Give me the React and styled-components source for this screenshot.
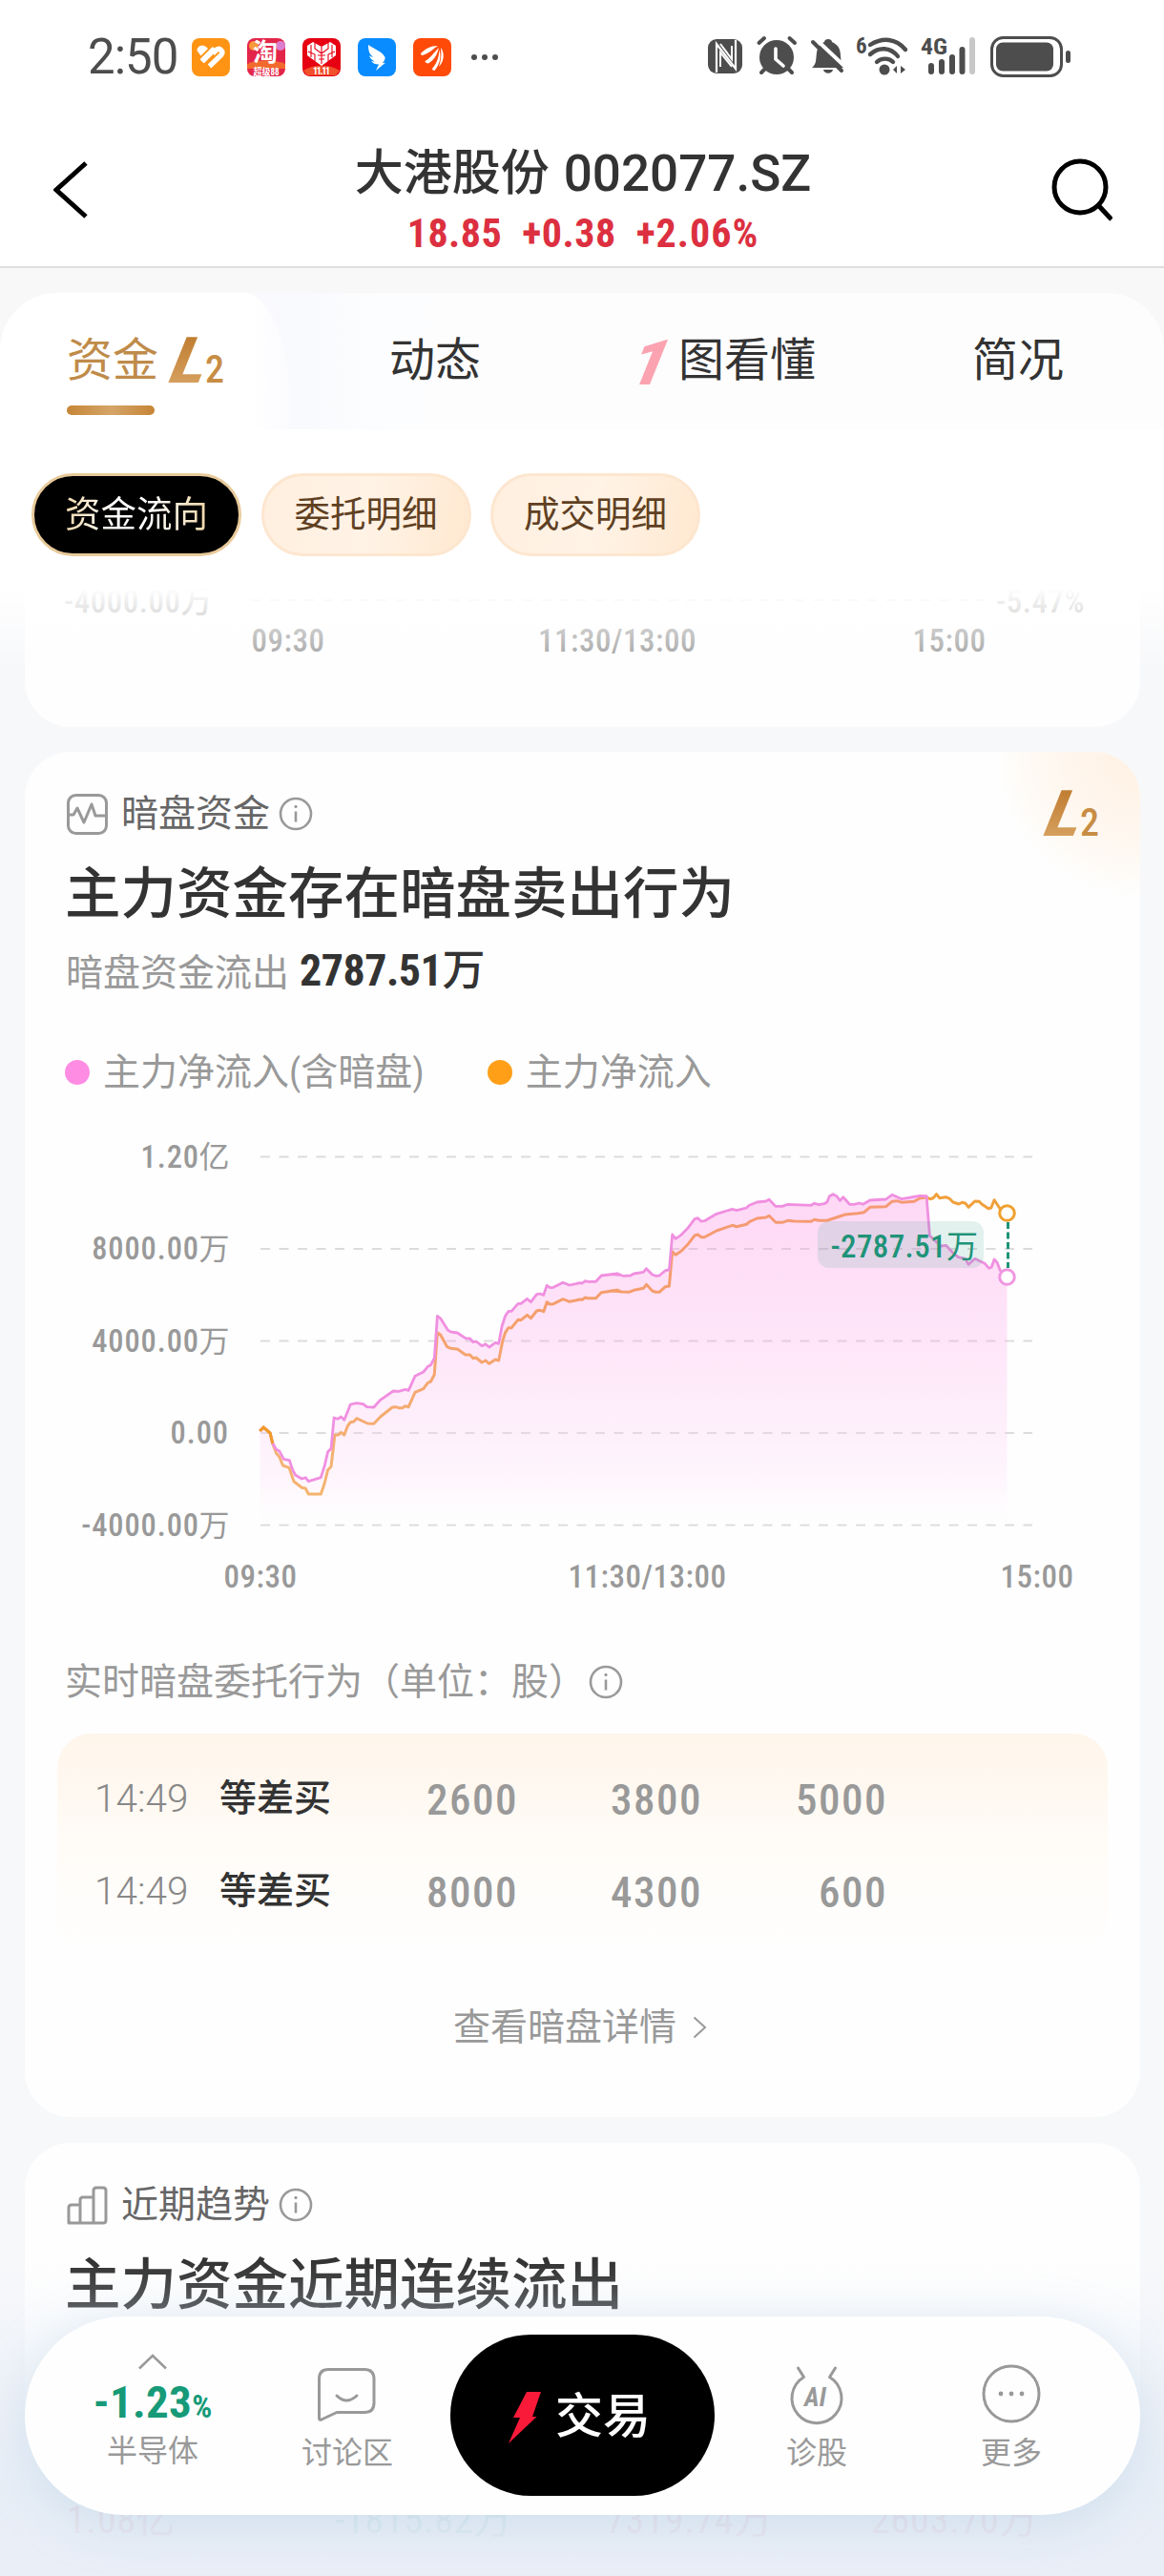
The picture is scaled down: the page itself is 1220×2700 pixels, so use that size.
import React from 'react';
import styled, { createGlobalStyle } from 'styled-components';

const GlobalStyle = createGlobalStyle`
  * {
    box-sizing: border-box;
  }

  body {
    margin: 0;
    font-family: Roboto, 'Noto Sans CJK SC', sans-serif;
    font-stretch: 87.5%;
    color: #333;
    background: #f7f8fa;
  }
`;

const Page = styled.div`
  position: relative;
  width: 1220px;
  height: 2700px;
  overflow: hidden;
  background: #f7f8fa;
`;

const Num = styled.span`
  font-size: ${(props) => props.$size}px;
  font-weight: ${(props) => props.$weight || 500};
  font-stretch: ${(props) => props.$stretch || 87.5}%;
  letter-spacing: ${(props) => props.$spacing || 0}px;
`;

/* status bar */

const StatusBar = styled.div`
  display: flex;
  justify-content: space-between;
  height: 120px;
  padding: 34px 96px 0 92px;
  background: #fff;
  color: #4d4d4d;
`;

const StatusSide = styled.div`
  display: flex;
  align-items: center;
  height: 52px;
`;

const Clock = styled.div`
  width: 109px;
  font-size: 51px;
  font-stretch: 100%;
  line-height: 54px;
  letter-spacing: -1px;
`;

const AppIcon = styled.svg`
  display: block;
  width: 40px;
  height: 40px;
  margin-right: 18px;
`;

const Dots = styled.svg`
  display: block;
  margin-left: 3px;
`;

/* nav bar */

const NavBar = styled.div`
  display: flex;
  justify-content: space-between;
  height: 161px;
  padding: 30px 54px 0 56px;
  background: #fff;
  border-bottom: 2px solid #dedede;
`;

const NavIcon = styled.svg`
  display: block;
  width: 64px;
  height: 66px;
  margin-top: 16px;
`;

const Stock = styled.div`
  text-align: center;
`;

const StockName = styled.div`
  display: flex;
  justify-content: center;
  gap: 15px;
  line-height: 64px;
  font-size: 51px;
  font-weight: 500;
`;

const Quote = styled.div`
  display: flex;
  justify-content: center;
  gap: 21px;
  margin-top: 6px;
  line-height: 50px;
  color: #dc3040;
`;

/* tabs */

const TabsArea = styled.div`
  height: 169px;
  padding-top: 26px;
  background: linear-gradient(#f8f8f8 80px, #fff 80px);
`;

const Tabs = styled.div`
  display: flex;
  height: 143px;
  border-radius: 60px 60px 0 0;
  overflow: hidden;
  background: linear-gradient(to right, #f9f9fe 270px, #f9fafd 320px, #fcfdfe 400px, #fdfdfe 480px);
`;

const Tab = styled.div`
  flex: none;
  width: ${(props) => props.$width}px;
  padding-left: ${(props) => props.$left}px;
  display: flex;
  height: 143px;
  font-size: 48px;
  line-height: 142px;
`;

const ActiveTab = styled.div`
  flex: none;
  width: 306px;
  height: 143px;
  padding: 41px 0 0 70px;
  background: linear-gradient(to right, #fff 265px, rgba(255, 255, 255, 0.2));
  border-radius: 0 50px 0 0 / 0 130px 0 0;
`;

const ActiveLabel = styled.div`
  display: flex;
  height: 60px;
  font-size: 48px;
  line-height: 60px;
  color: #bf8b4a;
`;

const Underline = styled.div`
  width: 92px;
  height: 10px;
  margin-top: 17px;
  border-radius: 5px;
  background: linear-gradient(to right, #c68536, #d5a568 50%, #c68536);
`;

const LevelTwo = styled.div`
  display: flex;
  align-items: baseline;
  height: 60px;
  margin-left: 11px;
  line-height: 60px;
  font-size: 40px;
  font-stretch: 75%;
  font-weight: 500;
  color: #c88d45;
`;

const LevelLetter = styled.span`
  display: inline-block;
  width: 38px;
  font-size: 67px;
  font-stretch: 100%;
  font-weight: 900;
  background: linear-gradient(to bottom, #bd7a2c, #d9a464);
  background-clip: text;
  color: transparent;
  transform: translateX(5px) skewX(-22deg);
`;

const BigOne = styled.span`
  width: 47px;
  margin-left: -4px;
  font-size: 66px;
  font-stretch: 100%;
  font-weight: 900;
  line-height: 147px;
  color: #fba3b1;
  transform: skewX(-22deg);
`;

/* pills */

const Pills = styled.div`
  display: flex;
  gap: 20.5px;
  height: 167px;
  padding: 46px 33px 0;
  background: #fff;
`;

const Pill = styled.div`
  width: 220px;
  height: 87px;
  border-radius: 44px;
  border: 3px solid #fde6cf;
  text-align: center;
  font-size: 37.5px;
  line-height: 81px;
  color: #5f4022;
  background: linear-gradient(100deg, #ffefdf, #fff3e6 50%, #ffe8d0);
`;

const ActivePill = styled(Pill)`
  border-color: #e8ca9b;
  background: #000;
  color: #fff;
`;

const PillText = styled.span`
  background: linear-gradient(to right, #f0d9ae, #fff 35%, #fff 60%, #efd6a8);
  background-clip: text;
  color: transparent;
`;

/* cards */

const Card = styled.section`
  position: relative;
  width: 1169px;
  height: ${(props) => props.$height}px;
  margin: 0 0 ${(props) => props.$gap || 0}px 26px;
  padding: 43px 34px 0;
  border-radius: 48px;
  background: #fefefe;
  overflow: hidden;
`;

const TailCard = styled(Card)`
  padding: 0;
  margin-bottom: 26px;
  border-radius: 0 0 48px 48px;
`;

const ScrollArea = styled.div`
  position: relative;
`;

const TopFade = styled.div`
  position: absolute;
  left: 0;
  top: 0;
  width: 100%;
  height: 84px;
  background: linear-gradient(#fff, rgba(255, 255, 255, 0));
`;

const Corner = styled.div`
  position: absolute;
  right: 0;
  top: 0;
  width: 170px;
  height: 150px;
  padding: 35px 0 0 58px;
  background: radial-gradient(circle at 100% 0, #fff0e2, rgba(255, 246, 236, 0.6) 50%, rgba(255, 255, 255, 0) 67%);
`;

const CardHead = styled.div`
  display: flex;
  align-items: center;
  height: 44px;
  padding-left: 10px;
  font-size: 39px;
  line-height: 44px;
  color: #666;
`;

const HeadIcon = styled.svg`
  display: block;
  width: 44px;
  height: 44px;
  margin-right: 13px;
`;

const Info = styled.svg`
  display: block;
  width: 36px;
  height: 36px;
  margin-left: ${(props) => props.$left}px;
`;

const CardTitle = styled.h2`
  margin: 27px 0 0 8px;
  height: 70px;
  font-size: 58.5px;
  font-weight: 500;
  line-height: 70px;
`;

const Summary = styled.div`
  display: flex;
  align-items: baseline;
  height: 46px;
  margin: 22px 0 0 9px;
  font-size: 39px;
  line-height: 46px;
  color: #999;
`;

const SummaryValue = styled.span`
  margin-left: 11px;
  color: #333;
`;

const Legend = styled.div`
  display: flex;
  height: 40px;
  margin: 64px 0 0 8px;
  font-size: 39px;
  line-height: 40px;
  color: #999;
`;

const LegendItem = styled.div`
  display: flex;
  align-items: center;
  margin-right: 66px;

  &::before {
    content: '';
    width: 26px;
    height: 26px;
    margin-right: 14px;
    border-radius: 13px;
    background: ${(props) => props.$color};
  }
`;

const Chart = styled.svg`
  display: block;
  width: 1100px;
  height: 500px;
  margin-top: 36px;
`;

const OrdersTitle = styled.div`
  display: flex;
  align-items: center;
  height: 46px;
  margin: 60px 0 31px 8px;
  font-size: 39px;
  line-height: 46px;
  color: #999;
`;

const Orders = styled.div`
  width: 1101px;
  height: 231px;
  padding: 19px 39px 0;
  border-radius: 36px;
  background: linear-gradient(#fff5eb, #fffcf8 55%, #fefefe);
`;

const OrderRow = styled.div`
  display: grid;
  grid-template-columns: 131px 126px 187px 193px 194px;
  align-items: center;
  height: 97px;
  line-height: 50px;
  color: #999;
`;

const OrderTime = styled.div`
  font-size: 40.5px;
  font-stretch: 100%;
  font-weight: 300;
  color: #888;
`;

const OrderType = styled.div`
  font-size: 39px;
  font-weight: 500;
  color: #333;
`;

const OrderVolume = styled.div`
  padding-top: 4px;
  font-size: 45px;
  font-weight: 500;
  letter-spacing: 1.5px;
  text-align: right;
`;

const More = styled.div`
  display: flex;
  align-items: center;
  justify-content: center;
  gap: 17px;
  height: 46px;
  margin-top: 54px;
  padding-right: 5px;
  font-size: 39px;
  line-height: 46px;
  color: #999;
`;

const Totals = styled.div`
  display: grid;
  grid-template-columns: 281px 284px 278px auto;
  margin: 189px 0 0 10px;
  font-size: 40px;
  line-height: 46px;
  letter-spacing: 0.8px;
`;

const Total = styled.div`
  color: ${(props) => (props.$down ? '#1f9c7c' : '#dc3040')};
`;

/* bottom bar */

const BottomFade = styled.div`
  position: absolute;
  left: 0;
  bottom: 0;
  width: 100%;
  height: 330px;
  background: linear-gradient(rgba(232, 238, 247, 0), rgba(232, 238, 247, 0.2) 50px, rgba(232, 238, 247, 0.7) 160px, rgba(230, 237, 246, 0.9) 240px, #e9eef7);
`;

const BottomBar = styled.nav`
  position: absolute;
  left: 26px;
  bottom: 64px;
  display: flex;
  width: 1169px;
  height: 208px;
  padding-left: 32px;
  border-radius: 104px;
  background: #fefefe;
  box-shadow: 0 10px 50px rgba(170, 200, 225, 0.4);
`;

const BarItem = styled.div`
  display: flex;
  flex-direction: column;
  align-items: center;
  width: 204px;
  height: 208px;
  padding-top: 38px;
  font-size: 32px;
  line-height: 40px;
  color: #999;
`;

const BarIcon = styled.svg`
  display: block;
  width: 64px;
  height: 72px;
  margin: 8px 0 5px;
`;

const Change = styled.div`
  height: 50px;
  margin: 9px 0 6px;
  line-height: 50px;
  color: #169a78;
  white-space: nowrap;
`;

const TradeButton = styled.div`
  display: flex;
  align-items: center;
  width: 277px;
  height: 169px;
  margin: 19px 5px 0 6px;
  padding: 0 0 7px 60px;
  border-radius: 85px;
  background: #000;
  color: #fff;
  font-size: 50px;
  font-weight: 500;
`;

const Bolt = styled.svg`
  width: 38px;
  height: 56px;
  margin: 12px 12px 0 0;
`;

// [x, y] pairs, opening session and the rest of the day
const mainEarly = [
  [555, 960], [565, 948], [583, 966], [590, 1000], [600, 1030], [608, 1040], [618, 1068], [635, 1075],
  [648, 1118], [670, 1138], [680, 1140], [688, 1158], [722, 1158], [732, 1125], [741, 1082], [750, 1072],
  [760, 972], [770, 972], [777, 964], [786, 972], [795, 945], [803, 932], [812, 930], [820, 920],
  [850, 936], [867, 937], [885, 915], [918, 885], [928, 884], [935, 887], [945, 887], [953, 881],
  [962, 884], [980, 838], [1003, 827], [1015, 808], [1023, 804], [1033, 782], [1041, 650], [1050, 658],
  [1068, 695], [1078, 700], [1096, 702], [1118, 720], [1130, 720], [1139, 731], [1147, 729], [1163, 744],
  [1173, 738], [1183, 748], [1200, 735], [1209, 738], [1220, 675], [1227, 650], [1236, 635], [1244, 635],
  [1262, 610], [1270, 611], [1287, 595], [1297, 605], [1313, 582], [1322, 580], [1332, 584], [1341, 554],
  [1350, 561], [1359, 560], [1385, 545], [1403, 553], [1420, 549], [1430, 546], [1438, 547], [1446, 540],
  [1453, 542], [1475, 542], [1490, 524], [1535, 517], [1543, 521],
];

const mainLate = [
  [0, 519], [18, 517], [30, 522], [52, 523], [66, 517], [93, 511], [101, 499], [118, 519], [128, 523],
  [138, 523], [155, 506], [166, 504], [175, 395], [184, 406], [200, 394], [220, 371], [238, 345], [247, 342],
  [256, 350], [266, 350], [300, 330], [345, 313], [357, 317], [385, 310], [393, 302], [415, 291], [440, 288],
  [449, 283], [468, 304], [486, 304], [502, 298], [520, 300], [568, 301], [577, 295], [590, 298], [613, 298],
  [665, 279], [700, 275], [718, 272], [735, 256], [780, 254], [797, 238], [812, 236], [825, 241], [860, 238],
  [875, 228], [895, 225], [905, 230], [914, 227], [923, 215], [932, 227], [950, 224], [960, 229], [970, 240],
  [986, 246], [996, 241], [1005, 244], [1014, 256], [1032, 237], [1044, 238], [1052, 247], [1070, 260],
  [1078, 258], [1087, 233], [1104, 262], [1123, 274],
];

const darkEarly = [
  [555, 960], [565, 948], [583, 966], [590, 998], [600, 1018], [608, 1022], [620, 1048], [636, 1052],
  [644, 1080], [652, 1098], [670, 1110], [680, 1106], [688, 1118], [705, 1112], [722, 1106], [732, 1070],
  [741, 1025], [750, 1015], [758, 918], [768, 922], [777, 915], [786, 925], [795, 900], [803, 876],
  [820, 872], [838, 875], [848, 884], [867, 885], [885, 862], [920, 834], [935, 835], [953, 829],
  [962, 832], [980, 787], [1003, 774], [1015, 757], [1023, 752], [1033, 730], [1041, 598], [1050, 606],
  [1070, 643], [1078, 648], [1096, 651], [1118, 668], [1130, 669], [1139, 680], [1147, 678], [1163, 692],
  [1173, 686], [1183, 696], [1200, 682], [1209, 685], [1218, 630], [1227, 598], [1236, 583], [1244, 583],
  [1262, 559], [1270, 559], [1287, 544], [1297, 554], [1313, 530], [1322, 528], [1332, 532], [1341, 502],
  [1350, 509], [1359, 508], [1385, 493], [1403, 501], [1420, 497], [1430, 494], [1438, 495], [1446, 488],
  [1453, 490], [1475, 490], [1490, 471], [1535, 465], [1543, 469],
];

const darkLate = [
  [0, 467], [18, 465], [35, 472], [56, 471], [66, 465], [93, 460], [101, 449], [118, 468], [128, 472],
  [138, 471], [155, 455], [166, 453], [175, 342], [184, 355], [200, 343], [220, 320], [238, 293], [247, 290],
  [256, 300], [266, 299], [300, 277], [345, 262], [357, 266], [385, 258], [393, 250], [415, 240], [440, 237],
  [449, 232], [467, 253], [486, 253], [502, 247], [568, 250], [577, 244], [590, 248], [605, 245], [613, 240],
  [620, 221], [630, 215], [640, 221], [650, 235], [659, 224], [677, 247], [690, 247], [705, 243], [715, 247],
  [735, 234], [780, 231], [797, 217], [825, 230], [845, 226], [875, 220], [895, 221], [904, 345], [915, 357],
  [935, 378], [950, 376], [970, 400], [985, 413], [1005, 418], [1014, 436], [1032, 418], [1060, 433],
  [1072, 448], [1079, 445], [1087, 420], [1095, 430], [1104, 455], [1123, 475],
];

const toPoints = (early, late) => [
  ...early.map(([x, y]) => `${(x / 2.613).toFixed(1)},${(y / 3).toFixed(1)}`),
  ...late.map(([x, y]) => `${(580 + x / 2.703).toFixed(1)},${(y / 3).toFixed(1)}`),
].join(' ');

const levels = [
  { label: '1.20', unit: '亿', y: 32.5 },
  { label: '8000.00', unit: '万', y: 129 },
  { label: '4000.00', unit: '万', y: 225.5 },
  { label: '0.00', unit: '', y: 322 },
  { label: '-4000.00', unit: '万', y: 418.5 },
];

const hours = [
  { label: '09:30', x: 213 },
  { label: '11:30/13:00', x: 618.5 },
  { label: '15:00', x: 1027 },
];

const orders = [
  { time: '14:49', type: '等差买', volumes: [2600, 3800, 5000] },
  { time: '14:49', type: '等差买', volumes: [8000, 4300, 600] },
];

const InfoIcon = ({ left }) => (
  <Info $left={left} viewBox="0 0 36 36" fill="none" stroke="#999" strokeWidth="2.6">
    <circle cx="18" cy="18" r="16" />
    <path d="M18 15.5v11" />
    <circle cx="18" cy="10.5" r="1.2" fill="#999" strokeWidth="1" />
  </Info>
);

const LevelTwoMark = () => (
  <LevelTwo>
    <LevelLetter>L</LevelLetter>2
  </LevelTwo>
);

const StatusIcons = () => (
  <svg width="386" height="52" viewBox="0 0 386 52" fill="#4d4d4d">
    <rect x="4" y="7" width="36" height="36" rx="9" />
    <path d="M13 42V12l20 26V8" fill="none" stroke="#fff" strokeWidth="2.2" />
    <path d="M17 36V21l12 15M29 14v14L17 12" fill="none" stroke="#fff" strokeWidth="2" />

    <circle cx="76" cy="26" r="18" />
    <path d="M57.5 11l5.5-5M95 11l-5.5-5M60 42l6-6M92 42l-6-6" stroke="#4d4d4d" strokeWidth="4" strokeLinecap="round" />
    <path d="M75 17v11l8 7" fill="none" stroke="#fff" strokeWidth="3.6" strokeLinecap="round" />

    <path d="M113 37c5-4 4-9 5-16 1-6 4-9 8-11 0-4 8-4 8 0 7 3 9 8 9 15l1 9 3 3z" />
    <path d="M125 39h10c-1 5-9 5-10 0z" />
    <path d="M116 6l34 32" stroke="#fff" strokeWidth="4" />
    <path d="M114 10l30 30" stroke="#4d4d4d" strokeWidth="4" strokeLinecap="round" />

    <text x="159" y="22" fontSize="23" fontWeight="700" textLength="11">6</text>
    <g fill="none" stroke="#4d4d4d" strokeWidth="4.4" strokeLinecap="round">
      <path d="M174 13c13-8 27-7 37 5" />
      <path d="M174 23c9-8 21-8 29 2" />
      <path d="M181 31c5-5 13-4 17 0" />
    </g>
    <circle cx="189" cy="39" r="5.5" />
    <path d="M202 35v8l-4-4zM206 35v8l5-4z" />

    <text x="227" y="23" fontSize="24" fontWeight="700" textLength="28" lengthAdjust="spacingAndGlyphs">4G</text>
    <g strokeWidth="6" strokeLinecap="round" stroke="#4d4d4d">
      <path d="M238 35v6M249 31v10M260 26v15M270.500 18v23" />
      <path d="M281 8v33" stroke="#c8c8c8" />
    </g>

    <rect x="301.500" y="5.500" width="73" height="40" rx="12" fill="none" stroke="#4d4d4d" strokeWidth="3" />
    <rect x="306" y="10.500" width="60" height="30" rx="7" />
    <rect x="379" y="19" width="5" height="13" rx="2.500" />
  </svg>
);

const AppIcons = () => (
  <>
    <AppIcon viewBox="0 0 40 40">
      <rect width="40" height="40" rx="8" fill="#ff9414" />
      <path d="M5.500 13c0-5 6-7 10-3.500l1.500 1.500-7.500 7.500z" fill="#fff" />
      <rect x="-3" y="-10" width="6" height="19" rx="1" fill="#fff" transform="translate(17 18) rotate(45)" />
      <path d="M18.500 29.500L30.500 18c3.500-4-1-8.500-5-5.500l-3.500 3.500" fill="none" stroke="#fff" strokeWidth="5.400" />
    </AppIcon>
    <AppIcon viewBox="0 0 40 40">
      <rect width="40" height="40" rx="8" fill="#e3254a" />
      <circle cx="7" cy="8" r="5" fill="#f79a3c" />
      <circle cx="35" cy="8" r="5" fill="#dd7fd0" />
      <path d="M0 27c12-5 28-5 40 0v5H0z" fill="#f36a2e" />
      <text x="6" y="24" fontSize="26" fontWeight="700" fill="#fff">淘</text>
      <text x="6.500" y="38.500" fontSize="10" fontWeight="700" fill="#fff" textLength="27" lengthAdjust="spacingAndGlyphs">超级88</text>
    </AppIcon>
    <AppIcon viewBox="0 0 40 40">
      <rect width="40" height="40" rx="8" fill="#e60012" />
      <path d="M1 34c10-7 28-7 38 0l-4 5H5z" fill="#f0502a" />
      <path d="M20 29L5 18V8l6-4 9 5 9-5 6 4v10z" fill="#fff" />
      <path d="M9 7v13M13 5v6l7 5 7-5V5M31 7v13M6 14l7 3v7M34 14l-7 3v7M16 18h8M17 22h6M20 9v18" fill="none" stroke="#e60012" strokeWidth="1.100" />
      <text x="11" y="38" fontSize="10" fontWeight="700" fill="#fff" textLength="18">11.11</text>
    </AppIcon>
    <AppIcon viewBox="0 0 40 40">
      <rect width="40" height="40" rx="8" fill="#088cff" />
      <path d="M11 7c7 5 15 7 17.500 13 .500 2-1 4-2.500 6l3-.300L19 34l3-6.500c-4 0-6-1-8-3.500 2 .500 3 .500 4 .300-4-1.500-5-3.500-6-6 2 1.200 3 1.500 4 1.500-4-3-5-7-5-12.800z" fill="#fff" />
    </AppIcon>
    <AppIcon viewBox="0 0 40 40">
      <rect width="40" height="40" rx="8" fill="#ff4a08" />
      <path d="M8 16c5-5 10-8 18-8-5 3-9 8-16 10-1.500 0-2-1-2-2zM12.500 24c6-3 9-9 14.500-14-2 8-5 13-11 16.500-2 0-3.500-1-3.500-2.500zM20 32c5-6 7-12 7.500-20 2 7 1 15-5 22-1.500 0-2.500-1-2.500-2zM29 10c4 5 4 14-2 20 2-6 3-12 2-20z" fill="#fff" />
    </AppIcon>
    <Dots width="30" height="10" fill="#4d4d4d">
      <circle cx="3" cy="5" r="3" />
      <circle cx="14" cy="5" r="3" />
      <circle cx="25" cy="5" r="3" />
    </Dots>
  </>
);

const FlowChart = () => {
  const main = toPoints(mainEarly, mainLate);
  const dark = toPoints(darkEarly, darkLate);

  return (
    <Chart viewBox="0 0 1100 500">
      <defs>
        <linearGradient id="area" x1="0" y1="72" x2="0" y2="418" gradientUnits="userSpaceOnUse">
          <stop offset="0" stopColor="#ff8ce3" stopOpacity="0.34" />
          <stop offset="0.35" stopColor="#ff9ce8" stopOpacity="0.28" />
          <stop offset="0.85" stopColor="#ffe0f8" stopOpacity="0.3" />
          <stop offset="1" stopColor="#fff" stopOpacity="0.2" />
        </linearGradient>
      </defs>
      {levels.map(({ label, unit, y }) => (
        <g key={label}>
          <path d={`M213 ${y}H1022`} stroke="#dcdcdc" strokeWidth="1.8" strokeDasharray="10 9.500" />
          <text x={unit ? 149 : 180} y={y + 11} textAnchor="end" fontSize="32.500" fontWeight="500" letterSpacing="0.9" fill="#999">{label}</text>
          <text x="148.500" y={y + 11} fontSize="32" fill="#999">{unit}</text>
        </g>
      ))}
      {hours.map(({ label, x }) => (
        <text key={label} x={x} y="484" textAnchor="middle" fontSize="33" fontWeight="500" letterSpacing="0.5" fill="#999">{label}</text>
      ))}
      <polyline points={main} fill="none" stroke="#f0a03c" strokeWidth="3" strokeLinejoin="round" />
      <polygon points={`${dark} 995.500,418 213,418`} fill="url(#area)" />
      <polyline points={dark} fill="none" stroke="#f08fe0" strokeWidth="2.800" strokeLinejoin="round" />
      <polyline points="212.400,320 216.200,316 223.100,322 225.800,333" fill="none" stroke="#f09a28" strokeWidth="3" />
      <rect x="797" y="100" width="174" height="49" rx="12" fill="#15977a" fillOpacity="0.12" />
      <text x="932" y="138" textAnchor="end" fontSize="33" fontWeight="500" letterSpacing="0.4" fill="#1f9378">-2787.51</text>
      <text x="932" y="138" fontSize="33" fill="#1f9378">万</text>
      <path d="M996.500 101v48" stroke="#1f9378" strokeWidth="3" strokeDasharray="7 3.500" />
      <circle cx="995.500" cy="91.500" r="7.800" fill="#fff" stroke="#efa02e" strokeWidth="3" />
      <circle cx="995.500" cy="158.500" r="7.800" fill="#fff" stroke="#f096e0" strokeWidth="3" />
    </Chart>
  );
};

const DarkPoolCard = () => (
  <Card $height={1431} $gap={27}>
    <Corner>
      <LevelTwoMark />
    </Corner>
    <CardHead>
      <HeadIcon viewBox="0 0 44 44" fill="none" stroke="#999" strokeWidth="3" strokeLinejoin="round">
        <rect x="1.500" y="2.500" width="40" height="40" rx="8" />
        <path d="M2 23h5l4-7 7 15 8-19 4 12h12" />
      </HeadIcon>
      暗盘资金
      <InfoIcon left={9} />
    </CardHead>
    <CardTitle>主力资金存在暗盘卖出行为</CardTitle>
    <Summary>
      暗盘资金流出
      <SummaryValue>
        <Num $size={46} $weight={700} $spacing={-0.5}>2787.51</Num>
        <Num $size={45}>万</Num>
      </SummaryValue>
    </Summary>
    <Legend>
      <LegendItem $color="#ff8ce3">主力净流入(含暗盘)</LegendItem>
      <LegendItem $color="#ff9f18">主力净流入</LegendItem>
    </Legend>
    <FlowChart />
    <OrdersTitle>
      实时暗盘委托行为（单位：股）
      <InfoIcon left={3} />
    </OrdersTitle>
    <Orders>
      {orders.map((order) => (
        <OrderRow key={order.volumes[0]}>
          <OrderTime>{order.time}</OrderTime>
          <OrderType>{order.type}</OrderType>
          {order.volumes.map((volume) => (
            <OrderVolume key={volume}>{volume}</OrderVolume>
          ))}
        </OrderRow>
      ))}
    </Orders>
    <More>
      查看暗盘详情
      <svg width="15" height="24" fill="none" stroke="#999" strokeWidth="2">
        <path d="M1.500 1.500L13 12 1.500 22.500" />
      </svg>
    </More>
  </Card>
);

const TrendCard = () => (
  <Card $height={520}>
    <CardHead>
      <HeadIcon viewBox="0 0 44 44" fill="none" stroke="#999" strokeWidth="3" strokeLinejoin="round">
        <path d="M2 41V25q0-3 3-3h9v19zM14 41V17q0-3 3-3h11v27zM28 41V7q0-3 3-3h7q3 0 3 3v31q0 3-3 3zM2 38q0 3 3 3h30" />
      </HeadIcon>
      近期趋势
      <InfoIcon left={9} />
    </CardHead>
    <CardTitle>主力资金近期连续流出</CardTitle>
    <Totals>
      <Total>1.08亿</Total>
      <Total $down>-1815.82万</Total>
      <Total>7319.74万</Total>
      <Total>2603.70万</Total>
    </Totals>
  </Card>
);

const App = () => (
  <Page>
    <GlobalStyle />
    <StatusBar>
      <StatusSide>
        <Clock>2:50</Clock>
        <AppIcons />
      </StatusSide>
      <StatusSide>
        <StatusIcons />
      </StatusSide>
    </StatusBar>
    <NavBar>
      <NavIcon viewBox="0 0 64 66" fill="none" stroke="#000" strokeWidth="5">
        <path d="M34 5L3 33l31 28" />
      </NavIcon>
      <Stock>
        <StockName>
          大港股份
          <Num $size={53} $stretch={100}>002077.SZ</Num>
        </StockName>
        <Quote>
          <Num $size={42} $weight={700} $spacing={0.5}>18.85</Num>
          <Num $size={42} $weight={700} $spacing={0.5}>+0.38</Num>
          <Num $size={42} $weight={700} $spacing={1}>+2.06%</Num>
        </Quote>
      </Stock>
      <NavIcon viewBox="0 0 64 66" fill="none" stroke="#000" strokeWidth="5">
        <circle cx="30" cy="30" r="27" />
        <path d="M49 49l14 15" />
      </NavIcon>
    </NavBar>
    <TabsArea>
      <Tabs>
        <ActiveTab>
          <ActiveLabel>
            资金
            <LevelTwoMark />
          </ActiveLabel>
          <Underline />
        </ActiveTab>
        <Tab $width={362} $left={102}>动态</Tab>
        <Tab $width={351} $left={0}>
          <BigOne>1</BigOne>
          图看懂
        </Tab>
        <Tab $width={201} $left={0}>简况</Tab>
      </Tabs>
    </TabsArea>
    <Pills>
      <ActivePill>
        <PillText>资金流向</PillText>
      </ActivePill>
      <Pill>委托明细</Pill>
      <Pill>成交明细</Pill>
    </Pills>
    <ScrollArea>
      <TailCard $height={145}>
        <svg width="1169" height="80" fontSize="33" fontWeight="500" fill="#999" letterSpacing="0.5">
          <text x="41" y="25">-4000.00万</text>
          <text x="1018" y="25">-5.47%</text>
          <path d="M237 12H1007" stroke="#dcdcdc" strokeWidth="1.800" strokeDasharray="10 9" />
          <text x="276" y="66" textAnchor="middle">09:30</text>
          <text x="621" y="66" textAnchor="middle">11:30/13:00</text>
          <text x="969" y="66" textAnchor="middle">15:00</text>
        </svg>
      </TailCard>
      <TopFade />
    </ScrollArea>
    <DarkPoolCard />
    <TrendCard />
    <BottomFade />
    <BottomBar>
      <BarItem>
        <svg width="32" height="18" fill="none" stroke="#999" strokeWidth="2.500">
          <path d="M2 16.500L16 3l14 13.500" />
        </svg>
        <Change>
          <Num $size={47} $weight={700} $spacing={0.3}>-1.23</Num>
          <Num $size={33} $weight={700}>%</Num>
        </Change>
        半导体
      </BarItem>
      <BarItem>
        <BarIcon viewBox="0 0 64 72" fill="none" stroke="#999" strokeWidth="3" strokeLinejoin="round" strokeLinecap="round">
          <path d="M12 9.500h38q10 0 10 10v25q0 10-10 10H21L5 62q-2.500 1-2.500-1.500v-41q0-10 9.500-10z" />
          <path d="M21 37q10 10 21 0" />
        </BarIcon>
        讨论区
      </BarItem>
      <TradeButton>
        <Bolt viewBox="0 0 38 56">
          <path d="M20 1h15L26 27h4.500L1 55 13 28H6z" fill="#f91a3a" />
        </Bolt>
        交易
      </TradeButton>
      <BarItem>
        <BarIcon viewBox="0 0 64 72" fill="none" stroke="#999" strokeWidth="3" strokeLinejoin="round" strokeLinecap="round">
          <path d="M12.500 8l6 9.500a26 26 0 1 0 27 0L51.500 8" />
          <text x="19" y="48" fontSize="27" fontWeight="700" fontStyle="italic" fill="#999" stroke="none">AI</text>
        </BarIcon>
        诊股
      </BarItem>
      <BarItem>
        <BarIcon viewBox="0 0 64 72" fill="none" stroke="#999" strokeWidth="3">
          <circle cx="32" cy="35" r="29" />
          <g fill="#999" stroke="none">
            <circle cx="21" cy="35" r="2.400" />
            <circle cx="32" cy="35" r="2.400" />
            <circle cx="43" cy="35" r="2.400" />
          </g>
        </BarIcon>
        更多
      </BarItem>
    </BottomBar>
  </Page>
);

export default App;
